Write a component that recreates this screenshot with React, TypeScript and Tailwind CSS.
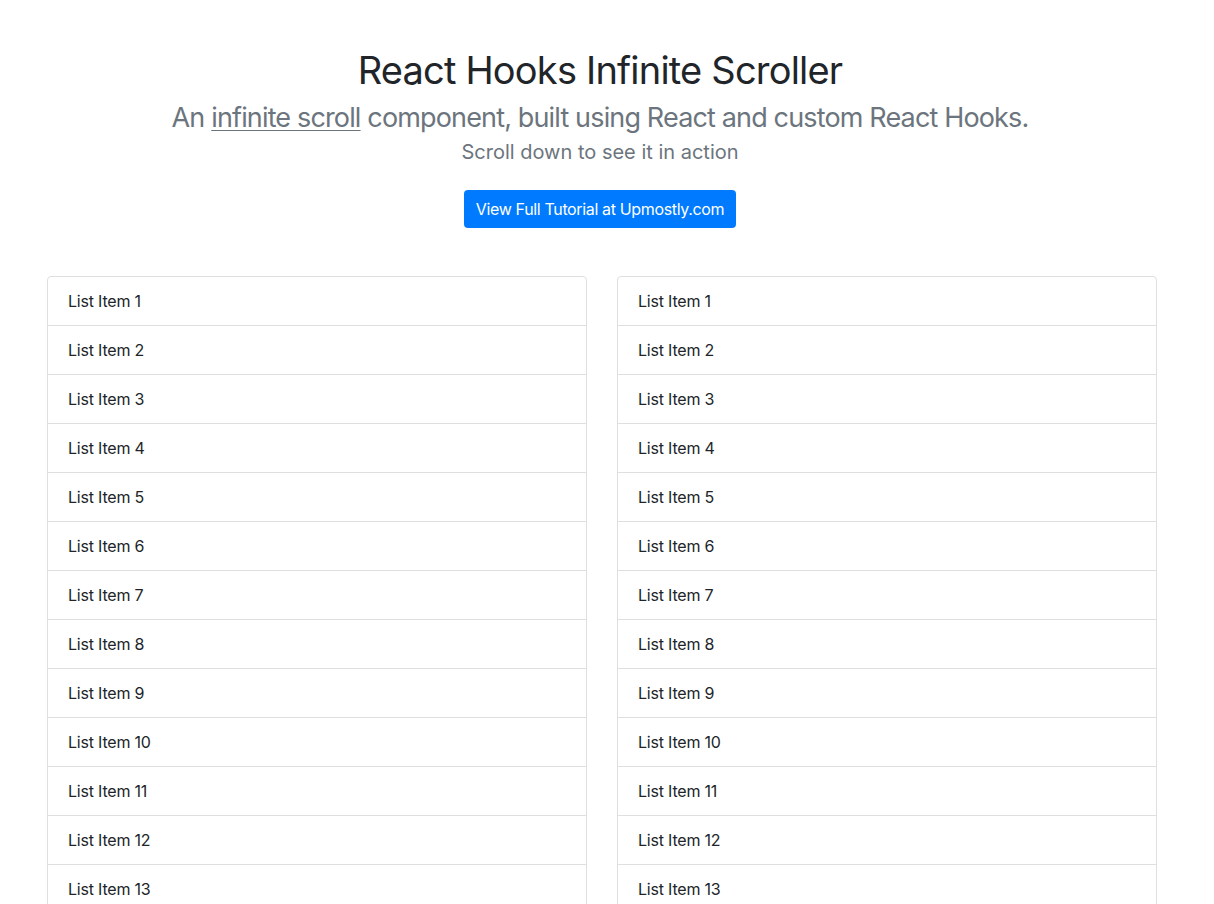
const items = Array.from({ length: 13 }, (_, i) => `List Item ${i + 1}`)

const ListColumn: React.FC<{ entries: string[] }> = ({ entries }) => {
  return (
    <ul className="flex flex-col rounded-[4px] border border-[#dfdfdf]">
      {entries.map((entry, index) => (
        <li
          key={index}
          className="border-b border-[#dfdfdf] px-5 py-3 text-base leading-6 tracking-[-0.2px] text-[#212529] last:border-b-0"
        >
          {entry}
        </li>
      ))}
    </ul>
  )
}

export default function App() {
  return (
    <div className="min-h-[904px] bg-white font-['Inter','Roboto',sans-serif] antialiased">
      <div className="flex flex-col items-center pt-[46px] pr-[14px]">
        <h1 className="text-[38px] leading-[48px] font-normal tracking-[-0.8px] text-[#212529]">
          React Hooks Infinite Scroller
        </h1>
        <h3 className="mt-[7px] text-[27px] leading-[34px] font-normal tracking-[-0.85px] text-[#6c757d]">
          An{' '}
          <a href="#" className="underline decoration-1 underline-offset-[3px]">
            infinite scroll
          </a>{' '}
          component, built using React and custom React Hooks.
        </h3>
        <p className="mt-[2px] text-[20px] leading-[30px] text-[#6c757d]">
          Scroll down to see it in action
        </p>
        <button className="mt-[23px] h-[38px] rounded-[4px] bg-[#007bff] px-[12px] text-base leading-6 tracking-[-0.35px] text-white">
          View Full Tutorial at Upmostly.com
        </button>
      </div>

      <div className="mt-[48px] grid grid-cols-2 gap-[30px] pl-[47px] pr-[57px]">
        <ListColumn entries={items} />
        <ListColumn entries={items} />
      </div>
    </div>
  )
}
